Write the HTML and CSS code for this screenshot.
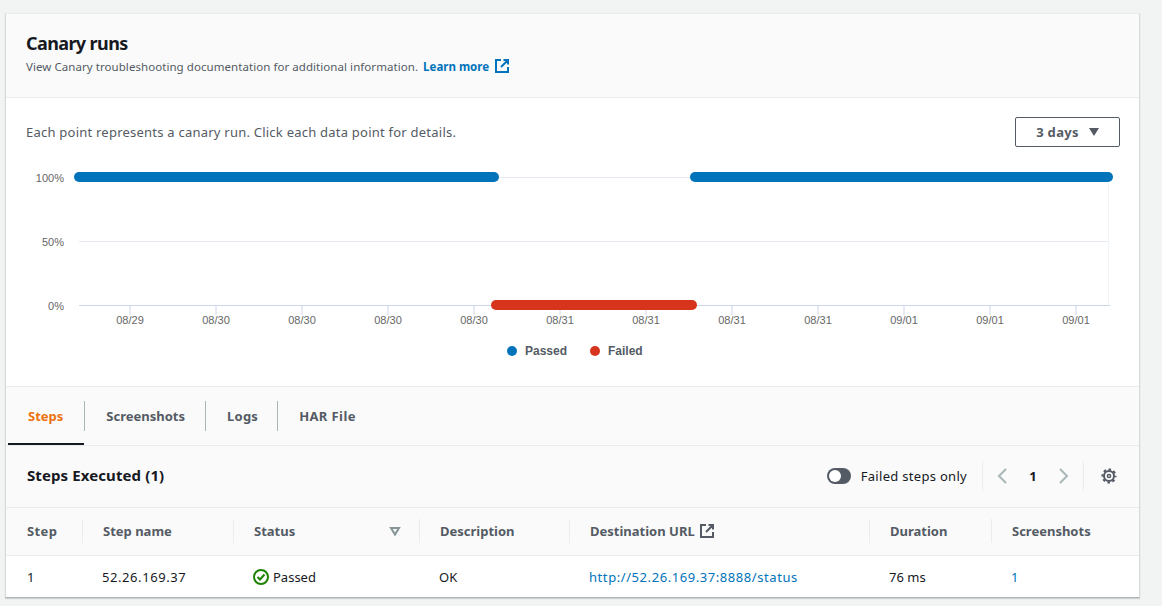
FILE: index.html
```html
<!DOCTYPE html>
<html lang="en">
<head>
    <meta charset="UTF-8">
    <meta name="viewport" content="width=device-width, initial-scale=1.0">
    <title>Canary runs</title>
    <link rel="stylesheet" href="styles.css">
</head>
<body>
    <main class="card">
        <header class="card-header">
            <h2>Canary runs</h2>
            <p class="hint">
                View Canary troubleshooting documentation for additional information.
                <a class="learn-more" href="#">Learn more
                    <svg class="ext-icon" viewBox="0 0 16 16" width="16" height="16">
                        <path d="M7 2H2v12h12V9M9.500 2H14v4.500M14 2 7 9" fill="none" stroke="#0073bb" stroke-width="2"/>
                    </svg>
                </a>
            </p>
        </header>

        <section class="chart-panel">
            <div class="chart-top">
                <p>Each point represents a canary run. Click each data point for details.</p>
                <button class="range-button">3 days <span class="caret"></span></button>
            </div>
            <!-- coordinates in here are chart space, x is page x - 6 -->
            <svg class="chart" viewBox="0 0 1134 226" width="1134" height="226">
                <g stroke="#e6e9f0" stroke-width="1">
                    <line x1="73" x2="1102" y1="17.500" y2="17.500"/>
                    <line x1="73" x2="1102" y1="81.500" y2="81.500"/>
                    <line x1="1102.500" x2="1102.500" y1="17" y2="145" stroke="#f0f5fa"/>
                </g>
                <g stroke="#ccd6eb" stroke-width="1">
                    <line x1="73" x2="1104" y1="145.500" y2="145.500"/>
                    <line x1="124" x2="124" y1="145" y2="155"/>
                    <line x1="210" x2="210" y1="145" y2="155"/>
                    <line x1="296" x2="296" y1="145" y2="155"/>
                    <line x1="382" x2="382" y1="145" y2="155"/>
                    <line x1="468" x2="468" y1="145" y2="155"/>
                    <line x1="554" x2="554" y1="145" y2="155"/>
                    <line x1="640" x2="640" y1="145" y2="155"/>
                    <line x1="726" x2="726" y1="145" y2="155"/>
                    <line x1="812" x2="812" y1="145" y2="155"/>
                    <line x1="898" x2="898" y1="145" y2="155"/>
                    <line x1="984" x2="984" y1="145" y2="155"/>
                    <line x1="1070" x2="1070" y1="145" y2="155"/>
                </g>
                <g class="axis-y" text-anchor="end">
                    <text x="58" y="22">100%</text>
                    <text x="58" y="86">50%</text>
                    <text x="58" y="150">0%</text>
                </g>
                <g class="axis-x" text-anchor="middle">
                    <text x="124" y="164">08/29</text>
                    <text x="210" y="164">08/30</text>
                    <text x="296" y="164">08/30</text>
                    <text x="382" y="164">08/30</text>
                    <text x="468" y="164">08/30</text>
                    <text x="554" y="164">08/31</text>
                    <text x="640" y="164">08/31</text>
                    <text x="726" y="164">08/31</text>
                    <text x="812" y="164">08/31</text>
                    <text x="898" y="164">09/01</text>
                    <text x="984" y="164">09/01</text>
                    <text x="1070" y="164">09/01</text>
                </g>
                <rect x="68" y="12" width="425" height="10" rx="5" fill="#0073bb"/>
                <rect x="684" y="12" width="423" height="10" rx="5" fill="#0073bb"/>
                <rect x="485" y="140" width="206" height="10" rx="5" fill="#d6341c"/>
                <circle cx="506" cy="191" r="5" fill="#0073bb"/>
                <text class="legend" x="519" y="195">Passed</text>
                <circle cx="589" cy="191" r="5" fill="#d6341c"/>
                <text class="legend" x="602" y="195">Failed</text>
            </svg>
        </section>

        <nav class="tabs">
            <a class="tab active" href="#">Steps</a>
            <a class="tab tab-shots" href="#">Screenshots</a>
            <a class="tab tab-logs" href="#">Logs</a>
            <a class="tab tab-har" href="#">HAR File</a>
        </nav>

        <div class="toolbar">
            <h3>Steps Executed (1)</h3>
            <div class="tools">
                <span class="toggle"><span class="knob"></span></span>
                <span class="toggle-label">Failed steps only</span>
                <span class="pager">
                    <svg viewBox="0 0 16 16" width="16" height="16"><path d="M11 1 4 8l7 7" fill="none" stroke="#aab7b8" stroke-width="2"/></svg>
                    <b>1</b>
                    <svg viewBox="0 0 16 16" width="16" height="16"><path d="m5 1 7 7-7 7" fill="none" stroke="#aab7b8" stroke-width="2"/></svg>
                </span>
                <span class="settings">
                    <svg viewBox="0 0 16 16" width="16" height="16">
                        <circle cx="8" cy="8" r="1.600" fill="none" stroke="#545b64" stroke-width="1.500"/>
                        <circle cx="8" cy="8" r="5" fill="none" stroke="#545b64" stroke-width="2"/>
                        <circle cx="8" cy="8" r="6.500" fill="none" stroke="#545b64" stroke-width="2" stroke-dasharray="2.600 2.505" stroke-dashoffset="1.300"/>
                    </svg>
                </span>
            </div>
        </div>

        <table class="steps">
            <thead>
                <tr>
                    <th class="col-step"><span>Step</span></th>
                    <th class="col-name"><span>Step name</span></th>
                    <th class="col-status">
                        <span class="status-head">Status
                            <svg viewBox="0 0 12 12" width="12" height="12"><path d="M2 3h8L6 9.500z" fill="none" stroke="#879596" stroke-width="2"/></svg>
                        </span>
                    </th>
                    <th class="col-desc"><span>Description</span></th>
                    <th class="col-url">
                        <span>Destination URL
                            <svg class="ext-icon" viewBox="0 0 16 16" width="16" height="16">
                                <path d="M7 2H2v12h12V9M9.500 2H14v4.500M14 2 7 9" fill="none" stroke="#545b64" stroke-width="2"/>
                            </svg>
                        </span>
                    </th>
                    <th class="col-duration"><span>Duration</span></th>
                    <th><span>Screenshots</span></th>
                </tr>
            </thead>
            <tbody>
                <tr>
                    <td class="cell-step">1</td>
                    <td class="cell-num">52.26.169.37</td>
                    <td>
                        <span class="passed">
                            <svg viewBox="0 0 16 16" width="16" height="16">
                                <circle cx="8" cy="8" r="7" fill="none" stroke="#1d8102" stroke-width="2"/>
                                <path d="m4.500 8 2.500 2.500 4.500-5" fill="none" stroke="#1d8102" stroke-width="2"/>
                            </svg>
                            Passed
                        </span>
                    </td>
                    <td>OK</td>
                    <td class="cell-num"><a href="#">http://52.26.169.37:8888/status</a></td>
                    <td>76 ms</td>
                    <td><a href="#">1</a></td>
                </tr>
            </tbody>
        </table>
    </main>
</body>
</html>
```

FILE: styles.css
```css
* {
    box-sizing: border-box;
}

body {
    margin: 0;
    padding: 13px 22px 8px 5px;
    background-color: #f2f3f3;
    font-family: "Noto Sans", sans-serif;
    font-size: 13px;
    color: #16191f;
}

a {
    color: #0073bb;
    text-decoration: none;
}

.card {
    width: 1135px;
    background: #fff;
    border-left: 1px solid #d5dbdb;
    border-right: 1px solid #d5dbdb;
    border-top: 1px solid #eaeded;
    border-bottom: 1px solid #aab7b8;
    box-shadow: 0 1px 1px rgba(0, 27, 36, 0.15);
}

.card-header {
    height: 84px;
    padding: 17px 20px 0;
    background: #fafafa;
    border-bottom: 1px solid #eaeded;
}

.card-header h2 {
    margin: 0;
    font-size: 18px;
    line-height: 24px;
    font-weight: 700;
    letter-spacing: -0.6px;
}

.hint {
    margin: 3px 0 0;
    font-size: 11.500px;
    line-height: 18px;
    letter-spacing: 0.06px;
    color: #545b64;
}

.learn-more {
    margin-left: 2px;
    font-weight: 700;
    letter-spacing: 0;
}

.ext-icon {
    margin-left: 2px;
    vertical-align: -3px;
}

.chart-panel {
    height: 289px;
    border-bottom: 1px solid #eaeded;
}

.chart-top {
    display: flex;
    justify-content: space-between;
    align-items: center;
    height: 62px;
    padding: 19px 19px 13px 20px;
}

.chart-top p {
    margin: 0;
    letter-spacing: 0.23px;
    color: #545b64;
}

.range-button {
    display: flex;
    align-items: center;
    justify-content: center;
    gap: 10px;
    width: 105px;
    height: 30px;
    background: #fff;
    border: 1px solid #545b64;
    border-radius: 2px;
    font-family: inherit;
    font-size: 13px;
    font-weight: 700;
    letter-spacing: 0.3px;
    color: #545b64;
}

.caret {
    width: 0;
    height: 0;
    border-left: 5.500px solid transparent;
    border-right: 5.500px solid transparent;
    border-top: 8px solid #545b64;
}

.chart {
    display: block;
}

.chart text {
    font-family: "Liberation Sans", Arial, sans-serif;
    font-size: 11px;
    fill: #666666;
}

.chart .legend {
    font-size: 12px;
    font-weight: 700;
    fill: #545b64;
}

.tabs {
    display: flex;
    align-items: center;
    height: 59px;
    padding: 0 0 0 2px;
    background: #fafafa;
    border-bottom: 1px solid #eaeded;
}

.tab {
    position: relative;
    display: flex;
    align-items: center;
    height: 30px;
    padding: 0 20px;
    font-weight: 700;
    color: #545b64;
    border-left: 1px solid #aab7b8;
}

.tab:first-child {
    padding: 0 21px 0 20px;
    border-left: 0;
}

.tab-shots {
    padding-left: 21px;
}

.tab-logs {
    padding: 0 19px 0 21px;
    letter-spacing: 0.25px;
}

.tab-har {
    padding-left: 21px;
    letter-spacing: 0.4px;
}

.tab.active {
    color: #ec7211;
}

.tab.active::after {
    content: "";
    position: absolute;
    left: 0;
    right: 0;
    bottom: -14px;
    height: 2px;
    background: #16191f;
}

.toolbar {
    display: flex;
    justify-content: space-between;
    align-items: center;
    height: 62px;
    padding: 0 22px 1px 21px;
    background: #fafafa;
    border-bottom: 1px solid #eaeded;
}

.toolbar h3 {
    margin: 0 0 2px;
    font-size: 15px;
    font-weight: 700;
    letter-spacing: 0.1px;
}

.tools {
    display: flex;
    align-items: center;
}

.toggle {
    display: inline-flex;
    align-items: center;
    width: 24px;
    height: 16px;
    padding: 0 2px;
    border-radius: 8px;
    background: #545b64;
}

.knob {
    width: 12px;
    height: 12px;
    border-radius: 50%;
    background: #fff;
}

.toggle-label {
    margin-left: 10px;
    padding-right: 15px;
    letter-spacing: 0.3px;
}

.pager {
    display: flex;
    align-items: center;
    height: 30px;
    padding: 0 12px;
    border-left: 1px solid #eaeded;
    border-right: 1px solid #eaeded;
}

.pager b {
    width: 44px;
    text-align: center;
}

.settings {
    display: flex;
    padding-left: 17px;
}

.steps {
    width: 100%;
    border-collapse: collapse;
    table-layout: fixed;
}

.steps th {
    height: 47px;
    padding: 0;
    background: #fafafa;
    border-bottom: 1px solid #eaeded;
    text-align: left;
    font-weight: 700;
    color: #545b64;
}

.steps th span {
    display: flex;
    align-items: center;
    height: 24px;
    padding-left: 20px;
    border-left: 1px solid #eaeded;
}

.steps th.col-step span {
    padding-left: 21px;
    border-left: 0;
    letter-spacing: 0.4px;
}

.steps th .ext-icon {
    margin-left: 4px;
}

.steps th .status-head {
    justify-content: space-between;
    padding-right: 18px;
}

.steps td {
    height: 42px;
    padding: 2px 0 0 20px;
}

.steps td.cell-step {
    padding-left: 21px;
}

.cell-num {
    letter-spacing: 0.57px;
}

.col-step {
    width: 76px;
}

.col-name {
    width: 151px;
}

.col-status {
    width: 186px;
}

.col-desc {
    width: 150px;
}

.col-url {
    width: 300px;
}

.col-duration {
    width: 122px;
}

.passed {
    display: flex;
    align-items: center;
    gap: 4px;
}
```
